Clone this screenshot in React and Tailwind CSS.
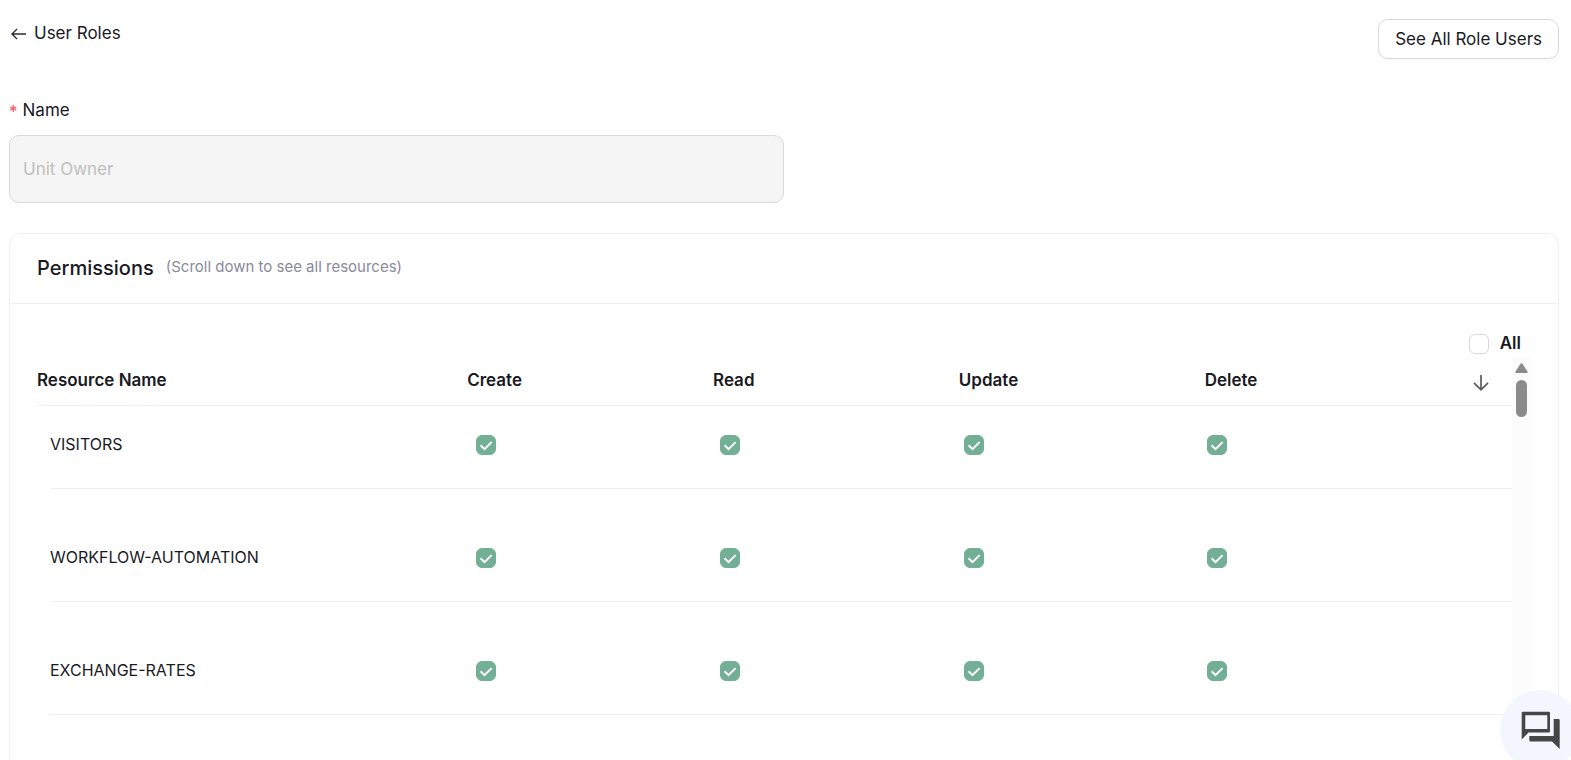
import React from "react";

const ACTIONS = ["Create", "Read", "Update", "Delete"];
const RESOURCES = ["VISITORS", "WORKFLOW-AUTOMATION", "EXCHANGE-RATES"];

function Checkbox({ id, label, defaultChecked }) {
  return (
    <span className="relative block size-5 shrink-0">
      <input
        id={id}
        type="checkbox"
        aria-label={label}
        defaultChecked={defaultChecked}
        className="peer block size-5 appearance-none rounded-md border border-[#d9d9d9] bg-white checked:border-[#73af95] checked:bg-[#73af95]"
      />
      <svg
        viewBox="0 0 20 20"
        fill="none"
        stroke="white"
        strokeWidth="2"
        className="pointer-events-none absolute inset-0 hidden size-5 peer-checked:block"
      >
        <path d="M4.6 10.3 8.5 14.2 15.6 7.1" />
      </svg>
    </span>
  );
}

function BackArrow() {
  return (
    <svg viewBox="0 0 15 12" fill="none" stroke="#2b2b33" strokeWidth="1.4" className="h-3 w-[15px]">
      <path d="M15 6H1.2M6 1 1 6l5 5" />
    </svg>
  );
}

function DownArrow() {
  return (
    <svg viewBox="0 0 16 16" fill="none" stroke="#5c5c5c" strokeWidth="1.7" className="size-4">
      <path d="M8 0v14.5M1 7.8l7 7 7-7" />
    </svg>
  );
}

function ChatIcon() {
  return (
    <svg viewBox="0 0 40 40" fill="#444746" className="size-10">
      <path
        fillRule="evenodd"
        d="M3 1.7H28.7Q30 1.7 30 3V21.3Q30 22.6 28.7 22.6H8.5L1.7 29.4V3Q1.7 1.7 3 1.7zM5.3 5.3V19H27.3V5.3z"
      />
      <path d="M9.3 26H33.7V9H38.4Q39.7 9 39.7 10.3V39L32 31.6H10.6Q9.3 31.6 9.3 30.3z" />
    </svg>
  );
}

export default function App() {
  return (
    <div className="flex h-screen flex-col overflow-hidden bg-white pr-3 pl-[9px] font-['Inter',sans-serif] text-[17px] text-[#1a1a1f]">
      <header className="flex items-start justify-between pt-[19px]">
        <a href="#roles" className="flex h-[30px] items-center gap-2 pl-[2px]">
          <BackArrow />
          <span>User Roles</span>
        </a>
        <button
          type="button"
          className="h-10 rounded-[10px] border border-[#d9d9d9] bg-white px-4 pt-[2px] shadow-[0_2px_0_rgba(0,0,0,0.02)]"
        >
          See All Role Users
        </button>
      </header>

      <div className="mt-10 w-1/2">
        <label htmlFor="name" className="flex h-6 items-center gap-[5px]">
          <span className="pt-1 text-[#ff4d4f]">*</span>
          <span>Name</span>
        </label>
        <input
          id="name"
          disabled
          defaultValue="Unit Owner"
          className="mt-3 block h-[68px] w-full rounded-[10px] border border-[#d9d9d9] bg-[#f5f5f5] px-[13px] text-[#bfbfbf]"
        />
      </div>

      <section className="mt-[30px] flex min-h-0 flex-1 flex-col rounded-t-xl border border-b-0 border-[#f0f0f0]">
        <div className="flex h-[70px] shrink-0 items-center gap-3 border-b border-[#f0f0f0] px-[27px] pb-[2px]">
          <h2 className="text-xl font-medium">Permissions</h2>
          <span className="text-[15px] text-[#8a8a9a]">(Scroll down to see all resources)</span>
        </div>

        <div className="flex min-h-0 flex-1 flex-col px-[27px] pt-[27px]">
          <div className="flex h-[26px] shrink-0 items-center justify-end gap-[11px] pr-[10px]">
            <Checkbox id="all" />
            <label htmlFor="all" className="font-semibold">All</label>
          </div>

          <div className="flex min-h-0 flex-1 overflow-hidden">
            <table className="block min-w-0 flex-1 text-left">
              <thead className="block">
                <tr className="grid h-[49px] grid-cols-[7fr_4fr_4fr_4fr_4fr_1fr] items-center border-b border-[#f0f0f0]">
                  <th className="font-semibold">Resource Name</th>
                  {ACTIONS.map((action) => (
                    <th key={action} className="font-semibold">{action}</th>
                  ))}
                  <th className="flex min-w-0 pt-1">
                    <button type="button" aria-label="Scroll down" className="ml-[22px]">
                      <DownArrow />
                    </button>
                  </th>
                </tr>
              </thead>
              <tbody className="flex flex-col gap-[30px] pl-[13px] text-base">
                {RESOURCES.map((resource) => (
                  <tr
                    key={resource}
                    className="grid h-[83px] grid-cols-[7fr_4fr_4fr_4fr_4fr_1fr] items-center border-b border-[#f0f0f0] pb-1"
                  >
                    <td className="pb-[2px]">{resource}</td>
                    {ACTIONS.map((action) => (
                      <td key={action}>
                        <Checkbox label={resource + " " + action} defaultChecked />
                      </td>
                    ))}
                  </tr>
                ))}
              </tbody>
            </table>

            <div className="flex w-[19px] shrink-0 flex-col items-center gap-[6px] bg-[#fcfcfc] pt-[6px]">
              <svg viewBox="0 0 13 11" fill="#8b8b8b" className="h-[11px] w-[13px]">
                <path d="M5.4 1Q6.5-.4 7.6 1l4.9 7.6Q13 10 11.8 10H1.2Q0 10 .5 8.6z" />
              </svg>
              <div className="h-[37px] w-[11px] rounded-full bg-[#8b8b8b]" />
            </div>
          </div>
        </div>
      </section>

      <button
        type="button"
        aria-label="Open chat"
        className="fixed -right-[9px] -bottom-[10px] flex size-20 items-center justify-center rounded-full bg-[#f3f6fc]"
      >
        <ChatIcon />
      </button>
    </div>
  );
}
